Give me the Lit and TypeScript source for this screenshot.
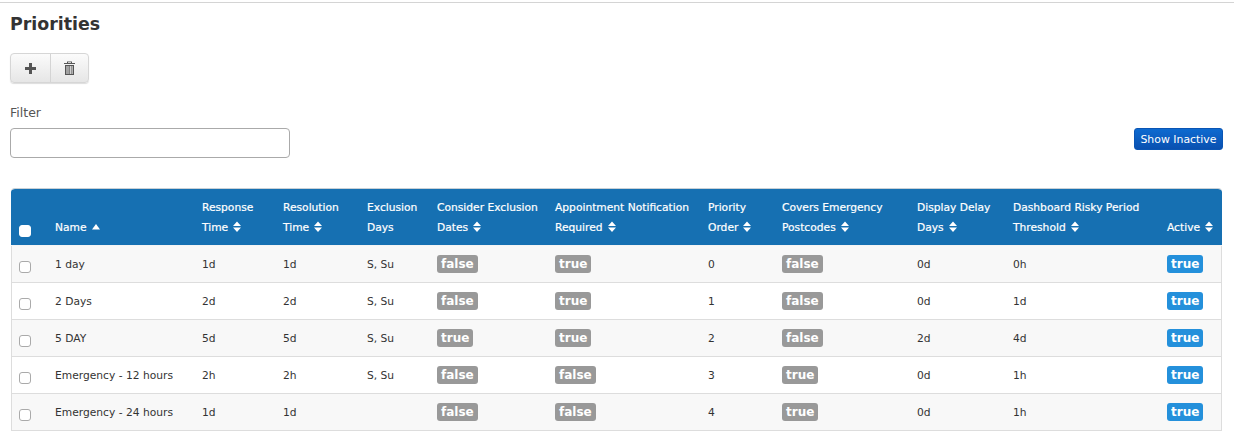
import { LitElement, html, css, svg } from "lit";
import { customElement } from "lit/decorators.js";

const heads: [string, string, boolean?][] = [
  ["", "Name"],
  ["Response", "Time"],
  ["Resolution", "Time"],
  ["Exclusion", "Days", true],
  ["Consider Exclusion", "Dates"],
  ["Appointment Notification", "Required"],
  ["Priority", "Order"],
  ["Covers Emergency", "Postcodes"],
  ["Display Delay", "Days"],
  ["Dashboard Risky Period", "Threshold"],
  ["", "Active"],
];

type Row = [string, string, string, string, boolean, boolean, number, boolean, string, string];
const rows: Row[] = [
  ["1 day", "1d", "1d", "S, Su", false, true, 0, false, "0d", "0h"],
  ["2 Days", "2d", "2d", "S, Su", false, true, 1, false, "0d", "1d"],
  ["5 DAY", "5d", "5d", "S, Su", true, true, 2, false, "2d", "4d"],
  ["Emergency - 12 hours", "2h", "2h", "S, Su", false, false, 3, true, "0d", "1h"],
  ["Emergency - 24 hours", "1d", "1d", "", false, false, 4, true, "0d", "1h"],
];

const sortBoth = svg`<svg class="sort" width="8" height="12" viewBox="0 0 8 12"><path d="M4 .5 8 5H0zM0 6.500h8L4 11z" fill="#fff"/></svg>`;
const sortUp = svg`<svg class="sort" width="8" height="12" viewBox="0 0 8 12"><path d="M4 3 8 8.500H0z" fill="#fff"/></svg>`;

@customElement("app-root")
export class AppRoot extends LitElement {
  static styles = css`
    :host { display: block; font-family: "DejaVu Sans", Verdana, sans-serif; font-size: 10.7px; color: #333; background: #fff; height: 434px; overflow: hidden; }
    .page { border-top: 1px solid #d4d4d4; margin-top: 2px; padding: 0 11px 0 10px; }
    h1 { margin: 0; padding-top: 11px; font-size: 17.4px; line-height: 20px; font-weight: 700; color: #333; }
    .btns { display: inline-flex; margin-top: 19px; height: 30px; border: 1px solid #d6d6d6; border-radius: 4px; background: linear-gradient(#fbfbfb, #e6e6e6); box-sizing: border-box; box-shadow: 0 1px 1px #ddd; }
    .btn { width: 38.500px; display: flex; align-items: center; justify-content: center; padding: 0; border: 0; background: none; }
    .btn + .btn { border-left: 1px solid #d4d4d4; }
    .filter-row { display: flex; justify-content: space-between; align-items: flex-start; margin-top: 23px; }
    label { display: block; font-size: 12.500px; line-height: 14px; color: #555; margin-bottom: 8px; }
    input.text { display: block; box-sizing: border-box; width: 280px; height: 30px; border: 1px solid #aaa; border-radius: 4px; background: #fff; margin: 0; }
    .inactive { box-sizing: border-box; width: 89px; height: 22px; margin: 22px 0 0; padding: 0; border: 1px solid #0a55b4; border-radius: 3px; background: linear-gradient(#0d6ad0, #0a50b0); color: #fff; font: 10.9px "DejaVu Sans", Verdana, sans-serif; }
    .wrap { margin: 30px 0 0 1px; width: 1211px; }
    table { border-collapse: separate; border-spacing: 0; table-layout: fixed; width: 1211px; }
    col:nth-child(1) { width: 36px; } col:nth-child(2) { width: 147px; } col:nth-child(3) { width: 81px; }
    col:nth-child(4) { width: 84px; } col:nth-child(5) { width: 70px; } col:nth-child(6) { width: 118px; }
    col:nth-child(7) { width: 153px; } col:nth-child(8) { width: 74px; } col:nth-child(9) { width: 135px; }
    col:nth-child(10) { width: 96px; } col:nth-child(11) { width: 154px; } col:nth-child(12) { width: 63px; }
    thead th { background: #1670b2; background-clip: padding-box; color: #fff; height: 58px; padding: 0 0 7px 8px; box-sizing: border-box; text-align: left; vertical-align: bottom; font-size: 10.7px; font-weight: 400; line-height: 20px; white-space: nowrap; -webkit-text-stroke: 0.2px #fff; border-top: 1px solid #c8d0d6; border-bottom: 1px solid #f4f4f4; }
    thead th:first-child { border-top-left-radius: 4px; }
    thead th:last-child { border-top-right-radius: 4px; }
    .sort { margin-left: 5px; vertical-align: -2px; }
    .line { display: block; }
    td { height: 37px; padding: 0 0 0 8px; box-sizing: border-box; border-bottom: 1px solid #ddd; font-size: 10.7px; color: #333; white-space: nowrap; vertical-align: middle; }
    tbody tr:nth-child(odd) td { background: #f8f8f8; }
    td:first-child { border-left: 1px solid #ddd; padding-left: 7px; }
    td:last-child { border-right: 1px solid #ddd; }
    .box { display: block; box-sizing: border-box; width: 12px; height: 12px; border: 1px solid #aaa; border-radius: 3px; background: #fff; margin-top: 5px; }
    th .box { border-color: #fff; margin: 0 0 1px; }
    .badge { display: inline-block; padding: 0 4px; height: 18px; line-height: 18px; border-radius: 3px; background: #999; color: #fff; font-size: 12px; font-weight: 700; }
    .badge.on { background: #2490db; }
  `;

  private badge(v: boolean, on = false) {
    return html`<span class="badge ${on ? "on" : ""}">${v ? "true" : "false"}</span>`;
  }

  render() {
    return html`<div class="page">
      <h1>Priorities</h1>
      <div class="btns">
        <button class="btn" aria-label="add"><svg width="11" height="11" viewBox="0 0 11 11"><path d="M4 0h3v4h4v3H7v4H4V7H0V4h4z" fill="#555"/></svg></button>
        <button class="btn" aria-label="delete"><svg width="11" height="14" viewBox="0 0 11 14"><path d="M0 2h11v1H0zM3 2V.5h5V2H7V1.300H4V2zM1 4h9v10H1zM2.500 5v8h1V5zM4.500 5v8h.8V5zM6 5v8h.8V5zM7.600 5v8h1V5z" fill="#555" fill-rule="evenodd"/></svg></button>
      </div>
      <div class="filter-row">
        <div><label>Filter</label><input class="text" type="text" /></div>
        <button class="inactive">Show Inactive</button>
      </div>
      <div class="wrap">
        <table>
          <colgroup>${Array.from({ length: 12 }, () => html`<col />`)}</colgroup>
          <thead>
            <tr>
              <th><span class="box"></span></th>
              ${heads.map(([a, b, nosort], i) => html`<th>${a ? html`<span class="line">${a}</span>` : ""}<span class="line">${b}${nosort ? "" : i === 0 ? sortUp : sortBoth}</span></th>`)}
            </tr>
          </thead>
          <tbody>
            ${rows.map((r) => html`<tr>
              <td><span class="box"></span></td>
              <td>${r[0]}</td><td>${r[1]}</td><td>${r[2]}</td><td>${r[3]}</td>
              <td>${this.badge(r[4])}</td><td>${this.badge(r[5])}</td>
              <td>${r[6]}</td><td>${this.badge(r[7])}</td>
              <td>${r[8]}</td><td>${r[9]}</td><td>${this.badge(true, true)}</td>
            </tr>`)}
          </tbody>
        </table>
      </div>
    </div>`;
  }
}
